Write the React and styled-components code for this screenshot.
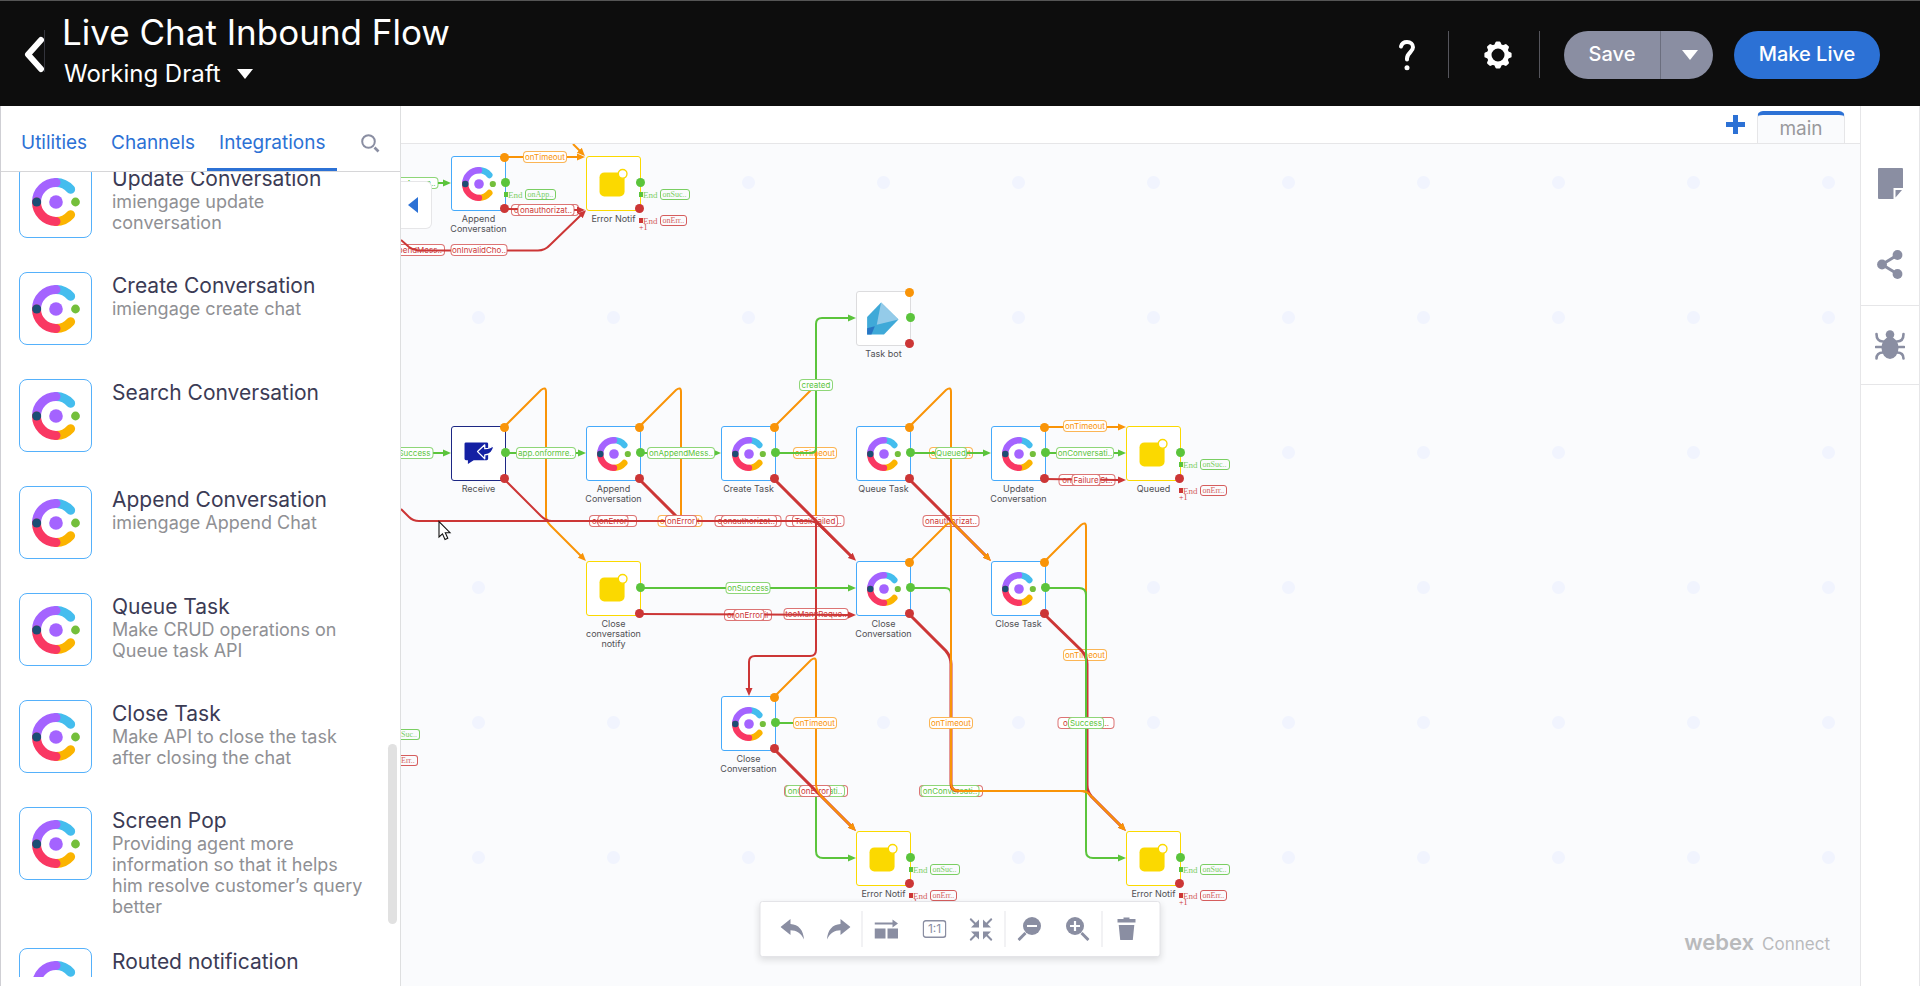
import React from "react";
import styled, { createGlobalStyle } from "styled-components";

const GlobalStyle = createGlobalStyle`
  *, *::before, *::after { box-sizing: border-box; }
  body { margin: 0; font-family: Inter, "Liberation Sans", sans-serif; background: #fff; }
  button { font: inherit; border: 0; padding: 0; background: none; color: inherit; cursor: pointer; }
`;

const blue = "#2c71d5";
const slate = "#8a8ea2";
const line = "#e6e6e8";
const tones = { green: "#5bc43c", orange: "#f99408", red: "#cc3636" };

/* ---------- page frame ---------- */
const Page = styled.div`
  height: 100vh;
  display: flex;
  flex-direction: column;
  overflow: hidden;
`;
const Header = styled.header`
  flex: none;
  height: 106px;
  padding: 2px 40px 0 24px;
  display: flex;
  align-items: center;
  background: #0d0d0d;
  border-top: 1px solid #555;
  color: #fff;
`;
const Body = styled.div`
  flex: 1;
  min-height: 0;
  display: flex;
`;

/* ---------- header ---------- */
const BackButton = styled.button`
  display: flex;
  margin-right: 17px;
  padding-bottom: 6px;
`;
const Titles = styled.div`
  flex: 1;
  height: 92px;
`;
const FlowTitle = styled.h1`
  margin: 0;
  font-size: 35px;
  line-height: 46px;
  font-weight: 400;
`;
const VersionButton = styled.button`
  display: flex;
  align-items: center;
  gap: 16px;
  margin-left: 2px;
  font-size: 24px;
  line-height: 38px;
`;
const HeaderIcon = styled.button`
  display: flex;
  justify-content: center;
  width: 90px;
  padding-left: 8px;
`;
const Divider = styled.span`
  width: 1px;
  height: 47px;
  background: #55555c;
`;
const SaveGroup = styled.div`
  display: flex;
  height: 48px;
  margin: 0 21px 0 24px;
  border-radius: 24px;
  overflow: hidden;
  background: ${slate};
`;
const SaveButton = styled.button`
  width: 97px;
  padding-bottom: 2px;
  font-size: 20px;
  font-weight: 500;
  border-right: 1px solid #6b6e7e;
`;
const SaveMenu = styled.button`
  width: 52px;
  display: flex;
  align-items: center;
  justify-content: center;
  padding-left: 6px;
`;
const LiveButton = styled.button`
  width: 146px;
  height: 48px;
  padding-bottom: 2px;
  border-radius: 24px;
  background: ${blue};
  font-size: 20px;
  font-weight: 500;
`;

/* ---------- side panel ---------- */
const Panel = styled.aside`
  flex: none;
  width: 401px;
  position: relative;
  display: flex;
  flex-direction: column;
  padding-bottom: 9px;
  border-left: 1px solid #cfcfd4;
  border-right: 1px solid #dedfe0;
`;
const Tabs = styled.nav`
  flex: none;
  height: 66px;
  display: flex;
  align-items: stretch;
  padding: 0 20px 0 8px;
  border-bottom: 1px solid #d6d6d8;
`;
const Tab = styled.button`
  padding: 11px 12px 0;
  font-size: 19px;
  color: ${blue};
  border-bottom: 3px solid ${(p) => (p.$active ? blue : "transparent")};
`;
const SearchButton = styled.button`
  display: flex;
  align-items: center;
  padding-top: 9px;
  margin-left: auto;
`;
const List = styled.ul`
  flex: 1;
  min-height: 0;
  margin: 0;
  padding: 0;
  list-style: none;
  overflow: hidden;
`;
const Item = styled.li`
  display: flex;
  gap: 20px;
  min-height: 107px;
  padding: 0 20px 31px 18px;
  &:first-child { margin-top: -7px; }
`;
const ItemIcon = styled.span`
  flex: none;
  width: 73px;
  height: 73px;
  display: flex;
  align-items: center;
  justify-content: center;
  background: #fff;
  border: 1px solid #55b1fb;
  border-radius: 8px;
`;
const ItemText = styled.div`
  padding-top: 2px;
  max-width: 254px;
`;
const ItemTitle = styled.h2`
  margin: 0;
  font-size: 21px;
  line-height: 24px;
  font-weight: 400;
  color: #3b3b55;
  white-space: nowrap;
`;
const ItemDesc = styled.p`
  margin: 0;
  font-size: 18px;
  line-height: 21px;
  color: #8f9094;
`;
const ScrollThumb = styled.span`
  position: absolute;
  right: 3px;
  bottom: 62px;
  width: 9px;
  height: 180px;
  border-radius: 5px;
  background: #e1e1e1;
`;

/* ---------- workspace ---------- */
const Workspace = styled.main`
  flex: 1;
  min-width: 0;
  display: flex;
  flex-direction: column;
`;
const SheetBar = styled.div`
  flex: none;
  height: 38px;
  display: flex;
  justify-content: flex-end;
  align-items: flex-end;
  gap: 12px;
  padding-right: 15px;
  border-bottom: 1px solid ${line};
`;
const AddSheet = styled.button`
  display: flex;
  height: 28px;
`;
const SheetTab = styled.button`
  width: 88px;
  height: 32px;
  padding-bottom: 2px;
  background: #fafbfd;
  border: 1px solid ${line};
  border-top: 4px solid ${blue};
  border-bottom: 0;
  border-radius: 6px 6px 0 0;
  color: #99999c;
  font-size: 19px;
`;
const Canvas = styled.section`
  flex: 1;
  min-height: 0;
  position: relative;
  overflow: hidden;
  background: #fafbfd radial-gradient(circle, #f1f4fe 6px, transparent 7px) 10px -29px / 135px 135px;
`;
/* The stage is panned: its origin sits left of and above the visible canvas. */
const Stage = styled.div`
  position: absolute;
  left: -401px;
  top: -144px;
  width: 1920px;
  height: 1000px;
`;
const Wires = styled.svg`
  position: absolute;
  inset: 0;
  fill: none;
  stroke-width: 2;
`;
const Label = styled.span`
  position: absolute;
  height: 12px;
  display: flex;
  align-items: center;
  justify-content: ${(p) => p.$align || "center"};
  padding: 0 2px;
  transform: translate(-50%, -50%);
  border: 1px solid;
  border-radius: 4px;
  font-size: 8px;
  line-height: 10px;
  white-space: nowrap;
  color: ${(p) => tones[p.$tone]};
  border-color: ${(p) => tones[p.$tone]}b0;
  background: #fff;
`;
const Node = styled.div`
  position: absolute;
  width: 55px;
`;
const NodeBox = styled.div`
  position: relative;
  height: 55px;
  border: 1px solid ${(p) => p.$edge};
  border-radius: 3px;
  background: #fff;
  display: flex;
  align-items: center;
  justify-content: center;
`;
const NodeName = styled.div`
  margin: 3px -6px 0;
  text-align: center;
  font-size: 9px;
  line-height: 10px;
  color: #505054;
`;
const Port = styled.i`
  position: absolute;
  width: 9px;
  height: 9px;
  border-radius: 50%;
  background: ${(p) => tones[p.$tone]};
  left: ${(p) => (p.$tone === "green" ? 49 : 48)}px;
  top: ${(p) => ({ orange: -4, green: 21, red: 47 })[p.$tone]}px;
`;
const EndRow = styled.div`
  position: absolute;
  left: 52px;
  top: ${(p) => (p.$tone === "green" ? 32 : 58)}px;
  display: flex;
  align-items: center;
  font: 9px/10px "Liberation Serif", serif;
  color: ${(p) => tones[p.$tone]};
  b { width: 4px; height: 5px; background: currentColor; }
  em { font-style: normal; opacity: 0.8; }
  span {
    margin-left: 2px;
    padding: 0 2px;
    border: 1px solid;
    border-radius: 3px;
    font-size: 8px;
    line-height: 9px;
    white-space: nowrap;
    opacity: 0.8;
  }
`;
const More = styled.span`
  position: absolute;
  left: 52px;
  top: 66px;
  font: 8px/10px "Liberation Serif", serif;
  color: ${tones.red};
`;
const OffTag = styled(EndRow)`
  left: 401px;
  top: ${(p) => p.$top}px;
  span { margin: 0; border-left: 0; border-radius: 0 3px 3px 0; padding-left: 0; }
`;
const CollapseButton = styled.button`
  position: absolute;
  left: -2px;
  top: 37px;
  width: 33px;
  height: 48px;
  display: flex;
  align-items: center;
  justify-content: center;
  padding-right: 5px;
  background: #fff;
  border: 1px solid ${line};
  border-left: 0;
  border-radius: 0 6px 6px 0;
`;
const Cursor = styled.svg`
  position: absolute;
  left: 438px;
  top: 520px;
`;
const Toolbar = styled.div`
  position: absolute;
  left: calc(50vw - 401px);
  bottom: 29px;
  transform: translateX(-50%);
  width: 401px;
  height: 56px;
  padding: 0 9px;
  display: flex;
  align-items: center;
  background: #fff;
  border: 1px solid #e4e4e8;
  border-radius: 3px;
  box-shadow: 0 3px 7px rgba(0, 0, 0, 0.12);
`;
const ToolGroup = styled.div`
  display: flex;
  justify-content: space-around;
  height: 36px;
  flex: ${(p) => p.$grow};
  & + & { border-left: 1px solid #e6e6ea; }
`;
const Tool = styled.button`
  display: flex;
  align-items: center;
  justify-content: center;
  color: ${slate};
`;
const Brand = styled.div`
  position: absolute;
  right: 30px;
  bottom: 29px;
  display: flex;
  align-items: baseline;
  gap: 8px;
  font-size: 17px;
  line-height: 26px;
  color: #b9babc;
  strong { font-size: 22px; font-weight: 600; }
`;
const Rail = styled.aside`
  flex: none;
  width: 60px;
  border-left: 1px solid ${line};
  border-right: 1px solid ${line};
  padding-top: 36px;
`;
const RailButton = styled.button`
  width: 100%;
  height: ${(p) => p.$h || 82}px;
  display: flex;
  align-items: center;
  justify-content: center;
  border-bottom: ${(p) => (p.$ruled ? `1px solid ${line}` : "0")};
`;

/* ---------- drawings ---------- */
const Caret = ({ size = 16 }) => (
  <svg width={size} height="10" viewBox="0 0 16 10" fill="#fff"><path d="M0 0H16L8 10Z" /></svg>
);
const Engage = ({ size }) => (
  <svg width={size} height={size} viewBox="0 0 48 48" fill="none" strokeWidth="9" strokeLinecap="round">
    <path d="M24 4.5A19.5 19.5 0 0 1 38.6 11.3" stroke="#44bdee" />
    <path d="M24 43.5A19.5 19.5 0 0 0 38.6 36.7" stroke="#fbb400" />
    <path d="M4.5 24A19.5 19.5 0 0 1 24 4.5" stroke="#a463ff" />
    <path d="M4.5 24A19.5 19.5 0 0 0 24 43.5" stroke="#f93863" />
    <circle cx="4.7" cy="24" r="4.5" fill="#1b4e74" stroke="none" />
    <circle cx="24" cy="24" r="6.8" fill="#a463ff" stroke="none" />
    <circle cx="43.5" cy="24" r="4.4" fill="#74bf3b" stroke="none" />
  </svg>
);
const Notify = () => (
  <svg width="55" height="55" viewBox="0 0 55 55">
    <rect x="13" y="16" width="26" height="25" rx="5" fill="#fbd900" />
    <circle cx="37" cy="17.5" r="4.5" fill="#fff" stroke="#fbd900" strokeWidth="1.4" />
  </svg>
);
const Receive = () => (
  <svg width="55" height="55" viewBox="0 0 55 55" fill="#1420a3">
    <path d="M14.500 16H36a1.500 1.500 0 0 1 1.500 1.500V33a1.500 1.500 0 0 1-1.500 1.500H22.500L16.500 38.500V34.500H14.500A1.500 1.500 0 0 1 13 33V17.500A1.500 1.500 0 0 1 14.500 16Z" />
    <path d="M26.500 25.500L34 18.500V22.500C38.500 22.500 41.500 21 43.500 18.500C43 24.500 40 28.500 34 29V33Z" stroke="#fff" strokeWidth="1.300" strokeLinejoin="round" />
  </svg>
);
const Bot = () => (
  <svg width="55" height="55" viewBox="0 0 55 55">
    <path d="M25 11L43 28.500L28 44H10.500V26Z" fill="#3fa9d8" />
    <path d="M25 11L43 28.500L20.500 34Z" fill="#94cbe9" />
    <path d="M10.500 37.500L18.500 35.500L15 44H10.500Z" fill="#2876c4" />
  </svg>
);
const Gear = () => (
  <svg width="30" height="30" viewBox="0 0 30 30" fill="none" stroke="#fff">
    <circle cx="15" cy="15" r="8.800" strokeWidth="4.600" />
    {[0, 45, 90, 135, 180, 225, 270, 315].map((a) => (
      <path key={a} d="M13.600 2.600H16.400L17.200 4.500H12.800Z" strokeWidth="2.400" strokeLinejoin="round" transform={`rotate(${a} 15 15)`} />
    ))}
  </svg>
);
const Question = () => (
  <svg width="18" height="32" viewBox="0 0 18 32" fill="none" stroke="#fff" strokeWidth="4" strokeLinecap="round" strokeLinejoin="round">
    <path d="M3 7.500C3.800 4.600 6 3 9 3C12.600 3 15 5.200 15 8.300C15 13 9 13.600 9 19.500V20.500" />
    <circle cx="9" cy="28.700" r="2.500" fill="#fff" stroke="none" />
  </svg>
);
const glyphs = { engage: <Engage size={34} />, notify: <Notify />, receive: <Receive />, bot: <Bot /> };
const edges = { engage: "#45aafb", notify: "#fbd900", receive: "#1c2784", bot: "#dcdcde" };

/* ---------- data ---------- */
const integrations = [
  ["Update Conversation", "imiengage update conversation"],
  ["Create Conversation", "imiengage create chat"],
  ["Search Conversation", ""],
  ["Append Conversation", "imiengage Append Chat"],
  ["Queue Task", "Make CRUD operations on Queue task API"],
  ["Close Task", "Make API to close the task after closing the chat"],
  ["Screen Pop", "Providing agent more information so that it helps him resolve customer’s query better"],
  ["Routed notification", "Notify WxCC desktop after the task is routed"],
];

const nodes = [
  { col: 0, row: 0, kind: "engage", name: "Append Conversation", ends: ["green:onApp.."] },
  { col: 1, row: 0, kind: "notify", name: "Error Notif", ends: ["green:onSuc..", "red:onErr.."], noTop: true },
  { col: 3, row: 1, kind: "bot", name: "Task bot" },
  { col: 0, row: 2, kind: "receive", name: "Receive" },
  { col: 1, row: 2, kind: "engage", name: "Append Conversation" },
  { col: 2, row: 2, kind: "engage", name: "Create Task" },
  { col: 3, row: 2, kind: "engage", name: "Queue Task" },
  { col: 4, row: 2, kind: "engage", name: "Update Conversation" },
  { col: 5, row: 2, kind: "notify", name: "Queued", ends: ["green:onSuc..", "red:onErr.."], noTop: true },
  { col: 1, row: 3, kind: "notify", name: "Close conversation notify", noTop: true },
  { col: 3, row: 3, kind: "engage", name: "Close Conversation" },
  { col: 4, row: 3, kind: "engage", name: "Close Task" },
  { col: 2, row: 4, kind: "engage", name: "Close Conversation" },
  { col: 3, row: 5, kind: "notify", name: "Error Notif", ends: ["green:onSuc..", "red:onErr.."], noTop: true },
  { col: 5, row: 5, kind: "notify", name: "Error Notif", ends: ["green:onSuc..", "red:onErr.."], noTop: true },
];

/* Labels that the wires run across: tone, x, y, width, text, alignment */
const lowLabels = [
  ["green", 409, 183, 59, "onAppen..", "flex-end"],
  ["red", 545, 210, 68, "o", "flex-start"],
  ["red", 415, 250, 60, "appendMess..", "flex-end"],
  ["red", 613, 521, 48, "on        Fail", "flex-start"],
  ["red", 613, 521, 31, "onError"],
  ["orange", 680, 521, 45, "onTimeout"],
  ["red", 748, 521, 67, "onauthorizat..", "flex-start"],
  ["red", 749, 521, 56, "onauthorizat.."],
  ["red", 815, 521, 59, "oTaskfailed..", "flex-end"],
  ["red", 815, 521, 46, "Task failed"],
  ["orange", 815, 453, 44, "onTimeout"],
  ["orange", 951, 453, 44, "onTimeout"],
  ["red", 951, 521, 57, "onauthorizat.."],
  ["red", 1087, 480, 57, "onInternalSt..", "flex-end"],
  ["red", 748, 615, 48, "onErrorFail", "flex-start"],
  ["red", 816, 614, 65, "tooManyReque.."],
  ["red", 951, 791, 64, "", "flex-start"],
  ["green", 950, 791, 59, "onConversati.."],
  ["orange", 1085, 655, 44, "onTimeout"],
  ["red", 816, 791, 64, "", "flex-end"],
  ["green", 815, 791, 60, "onConversati.."],
  ["red", 815, 791, 32, "onError"],
];
/* Labels that sit over the wires */
const topLabels = [
  ["orange", 545, 157, 44, "onTimeout"],
  ["red", 546, 210, 57, "onauthorizat.."],
  ["red", 479, 250, 57, "onInvalidCho.."],
  ["green", 411, 453, 45, "onSuccess", "flex-end"],
  ["green", 546, 453, 60, "app.onformre.."],
  ["green", 681, 453, 68, "onAppendMess.."],
  ["red", 681, 521, 32, "onError"],
  ["green", 816, 385, 34, "created"],
  ["green", 951, 453, 32, "Queued"],
  ["orange", 1085, 426, 44, "onTimeout"],
  ["green", 1085, 453, 58, "onConversati.."],
  ["red", 1086, 480, 29, "Failure"],
  ["green", 748, 588, 45, "onSuccess"],
  ["red", 749, 615, 31, "onError"],
  ["orange", 815, 723, 44, "onTimeout"],
  ["orange", 951, 723, 44, "onTimeout"],
  ["red", 1086, 723, 57, "onConnect..", "center"],
  ["green", 1086, 723, 36, "Success"],
];

/* Wires: tone, path, has arrow tip, width */
const wires = [
  ["green", "M438 183H444", 1],
  ["orange", "M504 157H578", 1],
  ["orange", "M573 144L580 151", 1],
  ["red", "M504 209L578 210", 1],
  ["red", "M401 240L409 247Q413 250 418 250.500H538Q545 250.500 550 245L581 215", 1],
  ["green", "M433 453H444", 1],
  ["orange", "M504 427L541 390Q546 386 546 392V516Q546 521 550 525L581 556", 1],
  ["green", "M506 453H579", 1],
  ["red", "M504 479L541 516Q546 521 552 521"],
  ["green", "M641 453H714", 1],
  ["orange", "M639 427L676 390Q681 386 681 392V516"],
  ["red", "M639 479L681 521", 0, 3],
  ["orange", "M774 427L811 390Q816 386 816 392V516"],
  ["green", "M776 453H811Q816 453 816 448V324Q816 318 822 318H849", 1],
  ["red", "M816 521V650Q816 656 810 656H755Q749 656 749 662V689", 1],
  ["red", "M401 509L409 517Q413 521 419 521H808Q815 521 819 525L851 556", 1],
  ["red", "M774 479L811 516L851 556", 0, 3],
  ["red", "M909 479L986 556", 1, 3],
  ["orange", "M909 427L946 390Q951 386 951 392V516Q951 521 955 525L986 556", 1],
  ["green", "M911 453H984", 1],
  ["orange", "M1044 427H1119", 1],
  ["green", "M1046 453H1119", 1],
  ["red", "M1044 479L1119 480", 1],
  ["green", "M641 588H849", 1],
  ["red", "M639 614L849 615", 1],
  ["green", "M911 588H945Q951 588 951 594"],
  ["red", "M909 614L946 651Q951 657 951 664V784Q951 791 959 791", 0, 3],
  ["orange", "M909 562L946 525Q951 521 951 527V783Q951 791 959 791H1080Q1086 791 1090 795", 0],
  ["orange", "M1044 562L1081 525Q1086 521 1086 527V600"],
  ["red", "M1044 614L1081 650Q1087 656 1087 664V785Q1087 791 1091 796L1121 826", 1, 3],
  ["green", "M1046 588H1079Q1086 588 1086 595V851Q1086 858 1093 858H1119", 1],
  ["orange", "M1078 791H1083Q1087 791 1091 796L1121 826", 1],
  ["green", "M776 723H800"],
  ["green", "M816 797V851Q816 858 823 858H849", 1],
  ["red", "M774 749L851 826", 1, 3],
  ["orange", "M774 697L811 660Q816 656 816 662V784Q816 790 821 796L851 826", 1],
];

const renderLabels = (labels) =>
  labels.map(([tone, x, y, w, text, align], i) => (
    <Label key={i} $tone={tone} $align={align} style={{ left: x, top: y, width: w }}>{text}</Label>
  ));

function FlowNode({ col, row, kind, name, ends = [], noTop }) {
  return (
    <Node style={{ left: 451 + col * 135, top: 156 + row * 135 }}>
      <NodeBox $edge={edges[kind]}>
        {glyphs[kind]}
        {!noTop && <Port $tone="orange" />}
        <Port $tone="green" />
        <Port $tone="red" />
        {ends.map((e) => {
          const [tone, text] = e.split(":");
          return <EndRow key={tone} $tone={tone}><b /><em>End</em><span>{text}</span></EndRow>;
        })}
        {ends.length > 1 && <More>+1</More>}
      </NodeBox>
      <NodeName>{name}</NodeName>
    </Node>
  );
}

export default function App() {
  return (
    <Page>
      <GlobalStyle />
      <Header>
        <BackButton aria-label="Back">
          <svg width="21" height="48" viewBox="0 0 21 48" fill="none">
            <path d="M17 12L4 26.500L17 41" stroke="#fff" strokeWidth="6" strokeLinecap="round" strokeLinejoin="round" />
            <path d="M20.500 2V44" stroke="#33343c" />
          </svg>
        </BackButton>
        <Titles>
          <FlowTitle>Live Chat Inbound Flow</FlowTitle>
          <VersionButton>Working Draft <Caret /></VersionButton>
        </Titles>
        <HeaderIcon aria-label="Help"><Question /></HeaderIcon>
        <Divider />
        <HeaderIcon aria-label="Settings"><Gear /></HeaderIcon>
        <Divider />
        <SaveGroup>
          <SaveButton>Save</SaveButton>
          <SaveMenu aria-label="Save options"><Caret /></SaveMenu>
        </SaveGroup>
        <LiveButton>Make Live</LiveButton>
      </Header>
      <Body>
        <Panel>
          <Tabs>
            <Tab>Utilities</Tab>
            <Tab>Channels</Tab>
            <Tab $active>Integrations</Tab>
            <SearchButton aria-label="Search">
              <svg width="19" height="19" viewBox="0 0 19 19" fill="none" stroke={slate}>
                <circle cx="7.500" cy="7.500" r="6.300" strokeWidth="2" />
                <path d="M13.500 13.500L17.500 17.500" strokeWidth="2.600" />
              </svg>
            </SearchButton>
          </Tabs>
          <List>
            {integrations.map(([title, desc]) => (
              <Item key={title}>
                <ItemIcon><Engage size={48} /></ItemIcon>
                <ItemText>
                  <ItemTitle>{title}</ItemTitle>
                  <ItemDesc>{desc}</ItemDesc>
                </ItemText>
              </Item>
            ))}
          </List>
          <ScrollThumb />
        </Panel>
        <Workspace>
          <SheetBar>
            <AddSheet aria-label="Add sheet">
              <svg width="19" height="19" viewBox="0 0 19 19" fill={blue}><path d="M7 0H12V7H19V12H12V19H7V12H0V7H7Z" /></svg>
            </AddSheet>
            <SheetTab>main</SheetTab>
          </SheetBar>
          <Canvas>
            <Stage>
              {renderLabels(lowLabels)}
              <Wires width="1920" height="1000">
                <defs>
                  {Object.entries(tones).map(([name, color]) => (
                    <marker key={name} id={`tip-${name}`} viewBox="0 0 8 8" refX="1" refY="4" markerWidth="8" markerHeight="8" markerUnits="userSpaceOnUse" orient="auto">
                      <path d="M0 0.500L8 4L0 7.500Z" fill={color} />
                    </marker>
                  ))}
                </defs>
                {wires.map(([tone, d, tip, w], i) => (
                  <path key={i} d={d} stroke={tones[tone]} strokeWidth={w || 2} markerEnd={tip ? `url(#tip-${tone})` : undefined} />
                ))}
              </Wires>
              {renderLabels(topLabels)}
              {nodes.map((n) => <FlowNode key={`${n.col}-${n.row}`} {...n} />)}
              <OffTag $tone="green" $top={729}><span>Suc..</span></OffTag>
              <OffTag $tone="red" $top={755}><span>Err..</span></OffTag>
              <Cursor width="14" height="21" viewBox="0 0 14 21" fill="#fff" stroke="#111" strokeWidth="1.100">
                <path d="M1 1.500V17L4.500 13.800L7 19.500L9.800 18.300L7.300 12.700H12Z" />
              </Cursor>
            </Stage>
            <CollapseButton aria-label="Collapse panel">
              <svg width="10" height="16" viewBox="0 0 10 16" fill={blue}><path d="M10 0V16L0 8Z" /></svg>
            </CollapseButton>
            <Brand><strong>webex</strong>Connect</Brand>
            <Toolbar>
              <ToolGroup $grow="93">
                <Tool aria-label="Undo">
                  <svg width="24" height="21" viewBox="0 0 24 21" fill="currentColor"><path d="M0 8L10 0V5C18 5.500 23 11 23.500 20.500C20.500 14 16 11.500 10 11.300V16Z" /></svg>
                </Tool>
                <Tool aria-label="Redo">
                  <svg width="24" height="21" viewBox="0 0 24 21" fill="currentColor"><path d="M24 8L14 0V5C6 5.500 1 11 0.500 20.500C3.500 14 8 11.500 14 11.300V16Z" /></svg>
                </Tool>
              </ToolGroup>
              <ToolGroup $grow="143">
                <Tool aria-label="Arrange">
                  <svg width="24" height="20" viewBox="0 0 24 20" fill="currentColor"><path d="M0 3.500H18V0.500L23.500 4.500L18 8.500V5.500H0ZM0 9.500H11V19.500H0ZM13 9.500H23.500V19.500H13Z" /></svg>
                </Tool>
                <Tool aria-label="Actual size">
                  <svg width="24" height="18" viewBox="0 0 24 18" fill="none" stroke="currentColor">
                    <rect x="0.800" y="0.800" width="22.400" height="16.400" rx="2.500" strokeWidth="1.400" />
                    <text x="12" y="13" textAnchor="middle" fontSize="12" fill="currentColor" stroke="none">1:1</text>
                  </svg>
                </Tool>
                <Tool aria-label="Fit to view">
                  <svg width="23" height="23" viewBox="0 0 23 23" fill="none" stroke="currentColor" strokeWidth="2">
                    {[0, 90, 180, 270].map((a) => (
                      <g key={a} transform={`rotate(${a} 11.500 11.500)`}>
                        <path d="M0.700 0.700L7 7" />
                        <path d="M9.500 1.500V9.500H1.500Z" fill="currentColor" stroke="none" />
                      </g>
                    ))}
                  </svg>
                </Tool>
              </ToolGroup>
              <ToolGroup $grow="97">
                <Tool aria-label="Zoom out">
                  <svg width="24" height="24" viewBox="0 0 24 24" fill="none">
                    <circle cx="14.500" cy="9" r="9" fill="currentColor" />
                    <path d="M1 23L8 16" stroke="currentColor" strokeWidth="3" />
                    <path d="M9.500 9H19.500" stroke="#fff" strokeWidth="2.200" />
                  </svg>
                </Tool>
                <Tool aria-label="Zoom in">
                  <svg width="24" height="24" viewBox="0 0 24 24" fill="none">
                    <circle cx="9.500" cy="9" r="9" fill="currentColor" />
                    <path d="M23 23L16 16" stroke="currentColor" strokeWidth="3" />
                    <path d="M4.500 9H14.500M9.500 4V14" stroke="#fff" strokeWidth="2.200" />
                  </svg>
                </Tool>
              </ToolGroup>
              <ToolGroup $grow="48">
                <Tool aria-label="Delete">
                  <svg width="20" height="24" viewBox="0 0 20 24" fill="currentColor"><path d="M7 0.500H13V2H19V5.500H1V2H7ZM2.200 8H17.800L16.300 23H3.700Z" /></svg>
                </Tool>
              </ToolGroup>
            </Toolbar>
          </Canvas>
        </Workspace>
        <Rail>
          <RailButton aria-label="Notes">
            <svg width="25" height="31" viewBox="0 0 25 31" fill={slate}>
              <path d="M0 1A1 1 0 0 1 1 0H24A1 1 0 0 1 25 1V20H15.500V31H1A1 1 0 0 1 0 30Z" />
              <path d="M17.500 22H24L17.500 29.500Z" />
            </svg>
          </RailButton>
          <RailButton aria-label="Share" $ruled>
            <svg width="26" height="29" viewBox="0 0 26 29" fill={slate}>
              <path d="M20.500 5L5 14.500L20.500 24" fill="none" stroke={slate} strokeWidth="3" />
              <circle cx="5" cy="14.500" r="4.900" /><circle cx="20.500" cy="5" r="4.900" /><circle cx="20.500" cy="24" r="4.900" />
            </svg>
          </RailButton>
          <RailButton aria-label="Debug" $h={79} $ruled>
            <svg width="30" height="30" viewBox="0 0 30 30" fill={slate}>
              <circle cx="15" cy="4.500" r="4.300" />
              <ellipse cx="15" cy="18" rx="8.500" ry="11" />
              <path d="M8 11.500C3.500 11.500 1.500 8.500 1.500 4M22 11.500C26.500 11.500 28.500 8.500 28.500 4M1 17H29M8 22.500C3.500 22.500 1.500 25 1.500 28.500M22 22.500C26.500 22.500 28.500 25 28.500 28.500" fill="none" stroke={slate} strokeWidth="2.600" strokeLinecap="round" />
            </svg>
          </RailButton>
        </Rail>
      </Body>
    </Page>
  );
}
